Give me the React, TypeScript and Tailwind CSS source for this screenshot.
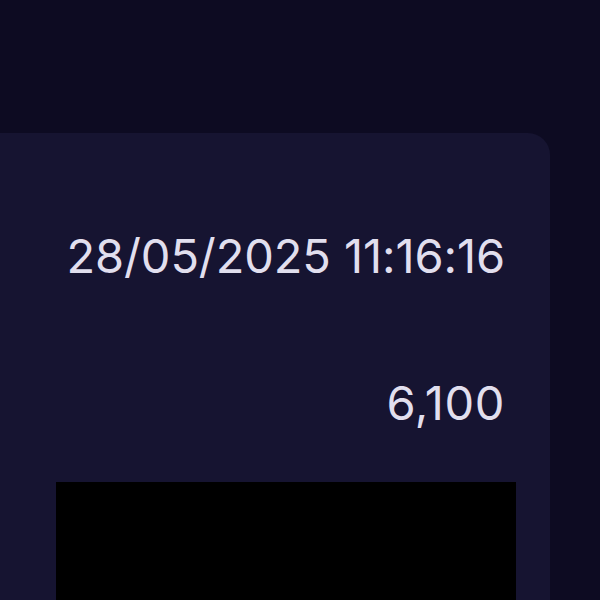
export default function App() {
  return (
    <div className="h-[600px] w-[600px] overflow-hidden bg-[#0d0b22] pt-[133px]" style={{ fontFamily: "Inter, 'Noto Sans', sans-serif" }}>
      <div className="-ml-[50px] flex h-[520px] w-[600px] flex-col items-end rounded-tr-[22px] bg-[#161431] pr-[45px] text-[#e1dfee]">
        <div className="mt-[95px] text-[47px] leading-[56px] tracking-[-0.1px]">28/05/2025 11:16:16</div>
        <div className="mt-[91px] text-[47px] leading-[56px] tracking-[0.6px]">6,100</div>
        <div className="mt-[51px] mr-[-11px] h-[200px] w-[460px] bg-black" />
      </div>
    </div>
  );
}
